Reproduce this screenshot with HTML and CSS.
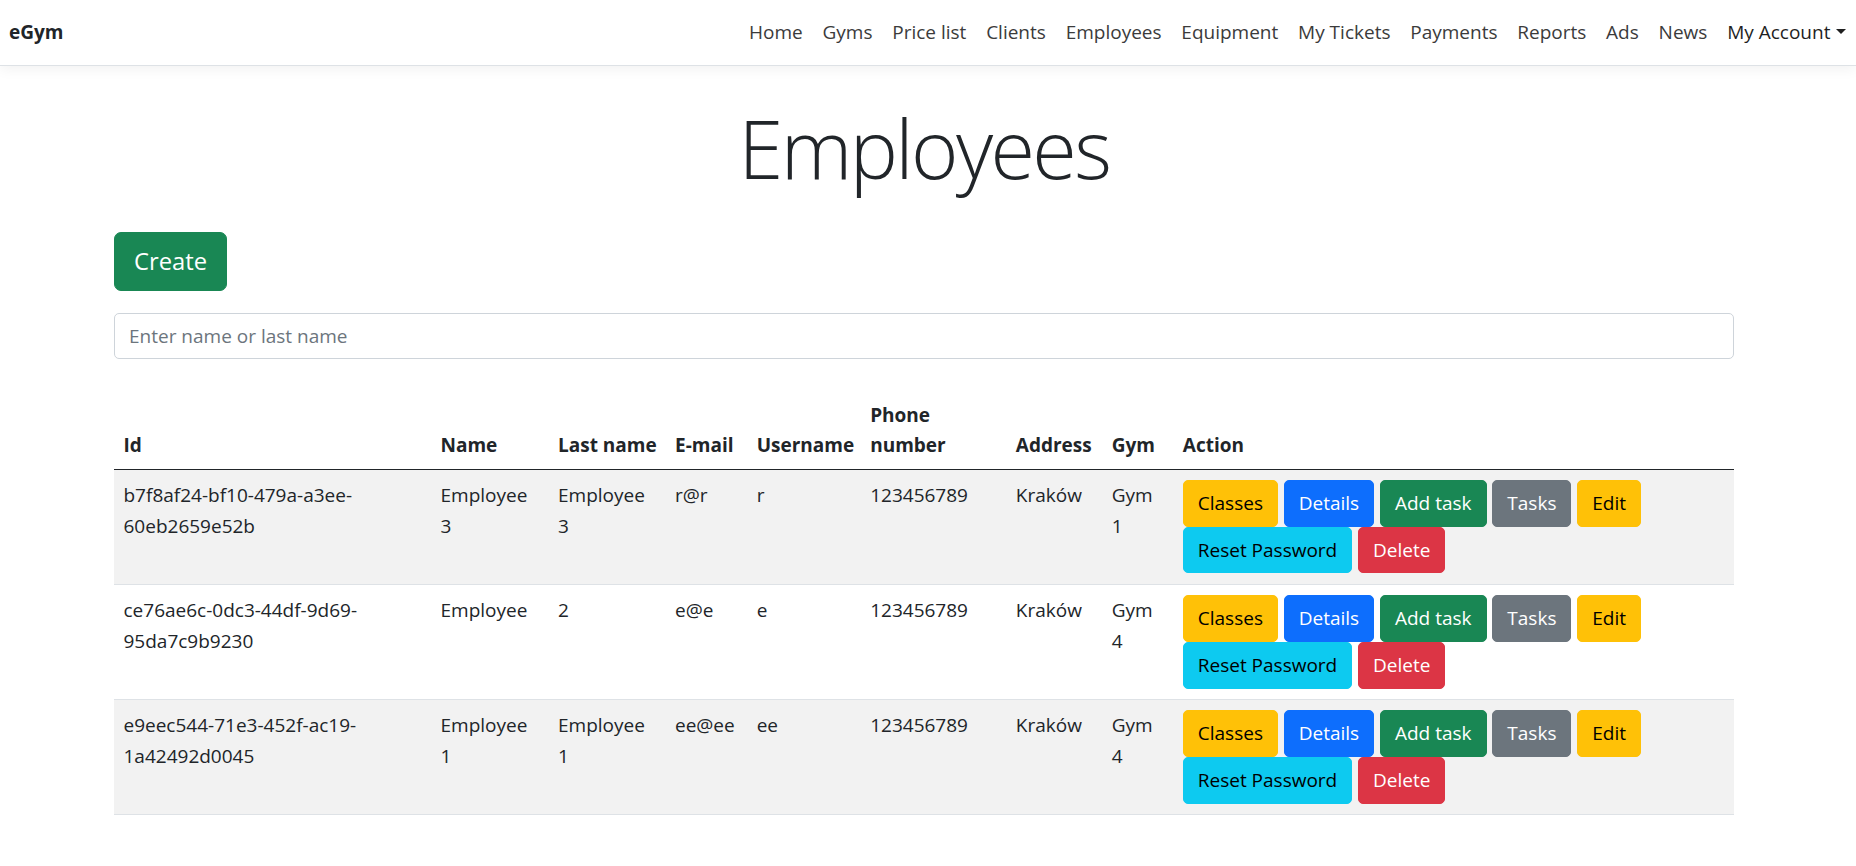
FILE: index.html
```html
<!DOCTYPE html>
<html lang="en">
<head>
<meta charset="utf-8">
<title>Employees - eGym</title>
<link rel="stylesheet" href="styles.css">
</head>
<body>
<header class="navbar">
  <a class="brand" href="#">eGym</a>
  <ul class="nav">
    <li><a class="nav-link" href="#">Home</a></li>
    <li><a class="nav-link" href="#">Gyms</a></li>
    <li><a class="nav-link" href="#">Price list</a></li>
    <li><a class="nav-link" href="#">Clients</a></li>
    <li><a class="nav-link" href="#">Employees</a></li>
    <li><a class="nav-link" href="#">Equipment</a></li>
    <li><a class="nav-link" href="#">My Tickets</a></li>
    <li><a class="nav-link" href="#">Payments</a></li>
    <li><a class="nav-link" href="#">Reports</a></li>
    <li><a class="nav-link" href="#">Ads</a></li>
    <li><a class="nav-link" href="#">News</a></li>
    <li><a class="nav-link nav-account dropdown-toggle" href="#">My Account</a></li>
  </ul>
</header>
<main class="container">
  <h1 class="page-title">Employees</h1>
  <div class="toolbar">
    <a class="btn btn-lg btn-success" href="#">Create</a>
  </div>
  <input class="form-control" type="text" placeholder="Enter name or last name">
  <table class="table">
    <colgroup>
      <col class="col-id">
      <col class="col-name">
      <col class="col-last">
      <col class="col-mail">
      <col class="col-user">
      <col class="col-phone">
      <col class="col-addr">
      <col class="col-gym">
      <col class="col-action">
    </colgroup>
    <thead>
      <tr>
        <th>Id</th>
        <th>Name</th>
        <th>Last name</th>
        <th>E-mail</th>
        <th>Username</th>
        <th class="th-wrap">Phone number</th>
        <th>Address</th>
        <th>Gym</th>
        <th>Action</th>
      </tr>
    </thead>
    <tbody>
      <tr class="striped">
        <td>b7f8af24-bf10-479a-a3ee-<wbr>60eb2659e52b</td>
        <td>Employee 3</td>
        <td>Employee 3</td>
        <td>r@r</td>
        <td>r</td>
        <td>123456789</td>
        <td>Kraków</td>
        <td>Gym 1</td>
        <td>
          <div class="actions">
            <a class="btn btn-warning" href="#">Classes</a>
            <a class="btn btn-primary" href="#">Details</a>
            <a class="btn btn-success" href="#">Add task</a>
            <a class="btn btn-secondary" href="#">Tasks</a>
            <a class="btn btn-warning" href="#">Edit</a>
            <a class="btn btn-info" href="#">Reset Password</a>
            <a class="btn btn-danger" href="#">Delete</a>
          </div>
        </td>
      </tr>
      <tr>
        <td>ce76ae6c-0dc3-44df-9d69-<wbr>95da7c9b9230</td>
        <td>Employee</td>
        <td>2</td>
        <td>e@e</td>
        <td>e</td>
        <td>123456789</td>
        <td>Kraków</td>
        <td>Gym 4</td>
        <td>
          <div class="actions">
            <a class="btn btn-warning" href="#">Classes</a>
            <a class="btn btn-primary" href="#">Details</a>
            <a class="btn btn-success" href="#">Add task</a>
            <a class="btn btn-secondary" href="#">Tasks</a>
            <a class="btn btn-warning" href="#">Edit</a>
            <a class="btn btn-info" href="#">Reset Password</a>
            <a class="btn btn-danger" href="#">Delete</a>
          </div>
        </td>
      </tr>
      <tr class="striped">
        <td>e9eec544-71e3-452f-ac19-<wbr>1a42492d0045</td>
        <td>Employee 1</td>
        <td>Employee 1</td>
        <td>ee@ee</td>
        <td>ee</td>
        <td>123456789</td>
        <td>Kraków</td>
        <td>Gym 4</td>
        <td>
          <div class="actions">
            <a class="btn btn-warning" href="#">Classes</a>
            <a class="btn btn-primary" href="#">Details</a>
            <a class="btn btn-success" href="#">Add task</a>
            <a class="btn btn-secondary" href="#">Tasks</a>
            <a class="btn btn-warning" href="#">Edit</a>
            <a class="btn btn-info" href="#">Reset Password</a>
            <a class="btn btn-danger" href="#">Delete</a>
          </div>
        </td>
      </tr>
    </tbody>
  </table>
</main>
</body>
</html>
```

FILE: styles.css
```css
* {
  box-sizing: border-box;
}

html, body {
  margin: 0;
  padding: 0;
  background: #ffffff;
}

body {
  font-family: "Open Sans", "Noto Sans", sans-serif;
  font-size: 19px;
  line-height: 1.5;
  color: #212529;
}

a {
  text-decoration: none;
}

/* ---------- Navbar ---------- */
.navbar {
  display: flex;
  align-items: center;
  justify-content: space-between;
  height: 66px;
  padding: 0 0 0 9px;
  background: #ffffff;
  border-bottom: 1px solid #dee2e6;
  box-shadow: 0 4px 12px rgba(0, 0, 0, 0.05);
}

.brand {
  font-size: 19px;
  font-weight: 700;
  color: #212529;
}

.nav {
  display: flex;
  align-items: center;
  list-style: none;
  margin: 0;
  padding: 0;
}

.nav-link {
  display: block;
  padding: 9.5px 9.9px;
  color: #3b3b3b;
  font-size: 19px;
  line-height: 28.5px;
}

.nav-account {
  color: #1f1f1f;
}

.dropdown-toggle::after {
  content: "";
  display: inline-block;
  margin-left: 0.3em;
  vertical-align: 0.255em;
  border-top: 0.3em solid currentColor;
  border-right: 0.3em solid transparent;
  border-left: 0.3em solid transparent;
  border-bottom: 0;
}

/* ---------- Main ---------- */
.container {
  width: 1620px;
  margin: 19px 0 0 114px;
}

.page-title {
  margin: 0;
  padding-top: 6px;
  text-align: center;
  font-size: 81px;
  font-weight: 300;
  letter-spacing: -2.6px;
  line-height: 114px;
  color: #212529;
}

.toolbar {
  margin-top: 27px;
}

.form-control {
  display: block;
  width: 100%;
  height: 46.8px;
  margin-top: 21.5px;
  padding: 7px 14px;
  font-family: inherit;
  font-size: 19px;
  color: #212529;
  background: #ffffff;
  border: 1px solid #ced4da;
  border-radius: 5px;
  outline: none;
}

.form-control::placeholder {
  color: #6c757d;
}

/* ---------- Buttons ---------- */
.btn {
  display: inline-block;
  padding: 7px 14px;
  font-size: 19px;
  line-height: 30.8px;
  border: 1px solid transparent;
  border-radius: 5px;
  color: #ffffff;
  white-space: nowrap;
  text-align: center;
}

.btn-lg {
  padding: 9.3px 19px;
  font-size: 23.75px;
  line-height: 38.4px;
  border-radius: 7px;
}

.btn-success {
  background: #198754;
  border-color: #198754;
}

.btn-primary {
  background: #0d6efd;
  border-color: #0d6efd;
}

.btn-secondary {
  background: #6c757d;
  border-color: #6c757d;
}

.btn-warning {
  background: #ffc107;
  border-color: #ffc107;
  color: #000000;
}

.btn-info {
  background: #0dcaf0;
  border-color: #0dcaf0;
  color: #000000;
}

.btn-danger {
  background: #dc3545;
  border-color: #dc3545;
}

/* ---------- Table ---------- */
.table {
  width: 100%;
  margin-top: 28px;
  border-collapse: collapse;
  table-layout: fixed;
}

.col-id { width: 317px; }
.col-name { width: 117.5px; }
.col-last { width: 117px; }
.col-mail { width: 81.7px; }
.col-user { width: 113.5px; }
.col-phone { width: 145.6px; }
.col-addr { width: 96px; }
.col-gym { width: 71px; }
.col-action { width: 560.7px; }

.table th,
.table td {
  padding: 10px 9.5px;
  text-align: left;
  line-height: 30.8px;
}

.table th {
  padding-top: 12.4px;
  padding-bottom: 7.6px;
  vertical-align: bottom;
  font-weight: 700;
  white-space: nowrap;
  border-bottom: 1px solid #212529;
}

.table th.th-wrap {
  white-space: normal;
}

.table td {
  vertical-align: top;
  border-bottom: 1px solid #dee2e6;
}

.table tr.striped td {
  background: #f2f2f2;
}

.actions {
  display: flex;
  flex-wrap: wrap;
  column-gap: 5.8px;
  row-gap: 0;
  margin-bottom: 0.5px;
}
```
